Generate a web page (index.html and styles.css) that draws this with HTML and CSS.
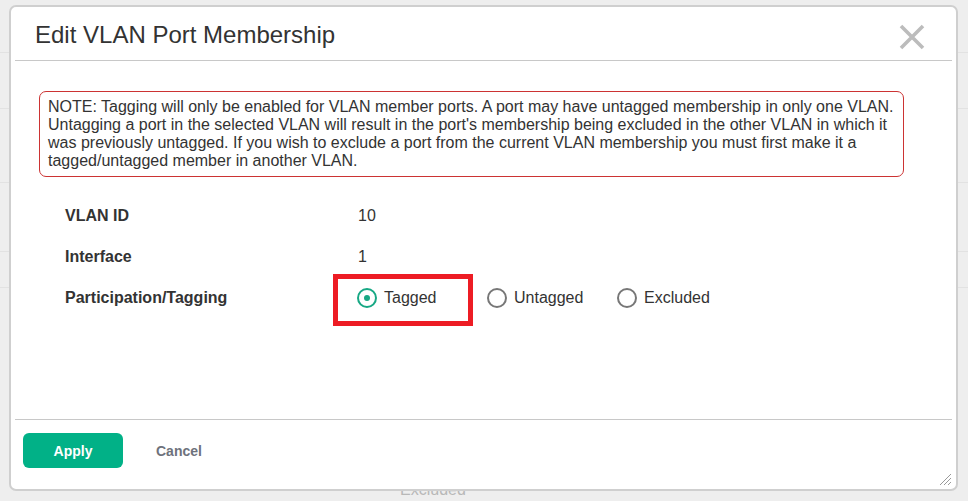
FILE: index.html
```html
<!DOCTYPE html>
<html>
<head>
<meta charset="utf-8">
<link rel="stylesheet" href="styles.css">
</head>
<body>
<div class="page">
  <div class="bg-lines">
    <div class="bg-line l1"></div>
    <div class="bg-line l2"></div>
    <div class="bg-line l3"></div>
    <div class="bg-line l4"></div>
    <div class="bg-line l5"></div>
  </div>
  <div class="bg-text">Excluded</div>
</div>
<div class="dialog">
  <div class="dlg-header">
    <h1 class="dlg-title">Edit VLAN Port Membership</h1>
    <button class="close-btn" aria-label="Close">
      <svg width="26" height="26" viewBox="0 0 26 26"><path d="M2 2 L24 24 M24 2 L2 24" stroke="#bcbcbc" stroke-width="3.6" fill="none"/></svg>
    </button>
  </div>
  <div class="dlg-body">
    <div class="note">NOTE: Tagging will only be enabled for VLAN member ports. A port may have untagged membership in only one VLAN. Untagging a port in the selected VLAN will result in the port's membership being excluded in the other VLAN in which it was previously untagged. If you wish to exclude a port from the current VLAN membership you must first make it a tagged/untagged member in another VLAN.</div>
    <div class="fields">
      <div class="row"><div class="label">VLAN ID</div><div class="value">10</div></div>
      <div class="row"><div class="label">Interface</div><div class="value">1</div></div>
      <div class="row"><div class="label">Participation/Tagging</div>
        <div class="radios">
          <label class="radio"><span class="circle checked"></span>Tagged</label>
          <label class="radio"><span class="circle"></span>Untagged</label>
          <label class="radio"><span class="circle"></span>Excluded</label>
          <div class="highlight"></div>
        </div>
      </div>
    </div>
  </div>
  <div class="dlg-footer">
    <button class="btn-apply">Apply</button>
    <button class="btn-cancel">Cancel</button>
  </div>
  <svg class="resize" width="14" height="14" viewBox="0 0 14 14"><path d="M13 2 L2 13 M13 6 L6 13 M13 10 L10 13" stroke="#9a9a9a" stroke-width="1" fill="none"/></svg>
</div>
</body>
</html>
```

FILE: styles.css
```css
* { box-sizing: border-box; }
html, body { margin: 0; padding: 0; }
body {
  width: 968px;
  height: 501px;
  overflow: hidden;
  background: #eeeeee;
  font-family: "Liberation Sans", Arial, sans-serif;
  color: #333;
  position: relative;
}
.page { position: absolute; inset: 0; }
.bg-line { position: absolute; left: 0; right: 0; height: 1px; background: #e2e2e2; }
.l1 { top: 52px; }
.l2 { top: 108px; }
.l3 { top: 182px; }
.l4 { top: 251px; }
.l5 { top: 287px; }
.bg-text {
  position: absolute;
  left: 400px;
  top: 481px;
  font-size: 16px;
  color: #b8b8b8;
}
.dialog {
  position: absolute;
  left: 9px;
  top: 5px;
  width: 949px;
  height: 486px;
  background: #fff;
  border: 2px solid #cfcfcf;
  border-radius: 7px;
  display: flex;
  flex-direction: column;
}
.dlg-header {
  margin: 0 4px;
  height: 54px;
  border-bottom: 1px solid #c8c8c8;
  display: flex;
  align-items: center;
  justify-content: space-between;
  padding: 0 27px 0 20px;
}
.dlg-title {
  margin: 0;
  font-weight: normal;
  font-size: 24px;
  color: #333;
  position: relative;
  top: 1px;
}
.close-btn {
  border: 0;
  background: none;
  padding: 0;
  width: 26px;
  height: 26px;
  position: relative;
  top: 3px;
}
.close-btn svg { display: block; }
.dlg-body {
  flex: 1;
  padding: 30px 48px 0 24px;
  margin: 0 4px;
  border-bottom: 1px solid #c8c8c8;
}
.note {
  border: 1px solid #cc3333;
  border-radius: 7px;
  padding: 6px 4px 6px 8px;
  font-size: 16px;
  line-height: 18px;
  color: #333;
}
.fields { margin-top: 18px; padding-left: 26px; }
.row {
  display: flex;
  align-items: center;
  height: 41px;
  font-size: 16px;
}
.label { width: 293px; font-weight: bold; color: #333; }
.value { color: #333; }
.radios {
  display: flex;
  align-items: center;
  position: relative;
  margin-left: -1px;
}
.radio {
  width: 130px;
  display: flex;
  align-items: center;
  gap: 7px;
  color: #333;
}
.circle {
  width: 20px;
  height: 20px;
  border: 2px solid #777;
  border-radius: 50%;
  display: flex;
  align-items: center;
  justify-content: center;
}
.circle.checked { border-color: #17a884; }
.circle.checked::after {
  content: "";
  width: 6px;
  height: 6px;
  border-radius: 50%;
  background: #17a884;
}
.highlight {
  position: absolute;
  left: -24px;
  top: -14px;
  width: 140px;
  height: 52px;
  border: 5px solid #ed1c24;
}
.dlg-footer {
  height: 69px;
  display: flex;
  align-items: center;
  padding: 0 0 8px 8px;
  margin: 0 4px;
}
.btn-apply {
  width: 100px;
  height: 35px;
  border: 0;
  border-radius: 6px;
  background: #01b187;
  color: #fff;
  font-family: "Liberation Sans", Arial, sans-serif;
  font-weight: bold;
  font-size: 14px;
}
.btn-cancel {
  border: 0;
  background: none;
  margin-left: 33px;
  padding: 0;
  color: #6e727c;
  font-family: "Liberation Sans", Arial, sans-serif;
  font-weight: bold;
  font-size: 14px;
}
.resize {
  position: absolute;
  right: 4px;
  bottom: 3px;
}
```
